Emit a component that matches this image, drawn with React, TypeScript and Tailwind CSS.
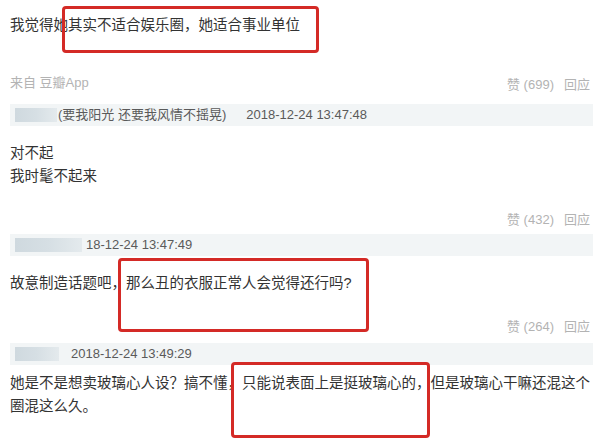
import React from "react";

const font = "font-['Liberation_Sans','Noto_Sans_CJK_SC',sans-serif]";

function Meta({ left, likes }: { left?: string; likes: number }) {
  return (
    <div className="flex h-[20px] items-center justify-between pr-[20px] text-[13px] text-[#b3b3b3]">
      <span>{left}</span>
      <span className="mt-[3px] flex gap-[10px]">
        <span>赞 ({likes})</span>
        <span>回应</span>
      </span>
    </div>
  );
}

function Bar({ blur, name, time, gap, className }: { blur: string; name?: string; time: string; gap: string; className: string }) {
  return (
    <div className={`flex w-[583px] items-center bg-[#f2f5f6] pl-[5px] text-[13px] text-[#5a5a5a] ${className}`}>
      <div className={`h-[14px] bg-gradient-to-r from-[#cfd9df] via-[#d6dfe4] to-[#e4eaed] ${blur}`} />
      {name && <span className="ml-[1px]">{name}</span>}
      <span className={gap}>{time}</span>
    </div>
  );
}

function RedBox({ className }: { className: string }) {
  return <div className={`absolute rounded-[4px] border-[3px] border-[#d42a26] ${className}`} />;
}

export default function App() {
  return (
    <div className={`relative h-[441px] w-[610px] overflow-hidden bg-white ${font}`}>
      <div className="flex flex-col pl-[10px] text-[14.5px] text-[#333]">
        <p className="mt-[15px] leading-[20px]">我觉得她其实不适合娱乐圈，她适合事业单位</p>

        <div className="mt-[38px]">
          <Meta left="来自 豆瓣App" likes={699} />
        </div>

        <Bar className="mt-[11px] h-[22px]" blur="w-[42px]" gap="ml-[20px]" name="(要我阳光 还要我风情不摇晃)" time="2018-12-24 13:47:48" />

        <p className="mt-[16px] leading-[23px]">
          对不起
          <br />
          我时髦不起来
        </p>

        <div className="mt-[20px]">
          <Meta likes={432} />
        </div>

        <Bar className="mt-[6px] h-[22px]" blur="w-[67px]" gap="ml-[4px]" time="18-12-24 13:47:49" />

        <p className="mt-[17px] leading-[20px]">故意制造话题吧，那么丑的衣服正常人会觉得还行吗?</p>

        <div className="mt-[22px]">
          <Meta likes={264} />
        </div>

        <Bar className="mt-[8px] h-[22px]" blur="w-[44px]" gap="ml-[12px]" time="2018-12-24 13:49:29" />

        <p className="mt-[7px] pr-[8px] leading-[23px]">
          她是不是想卖玻璃心人设？搞不懂，只能说表面上是挺玻璃心的，但是玻璃心干嘛还混这个圈混这么久。
        </p>
      </div>

      <RedBox className="left-[62px] top-[6px] h-[47px] w-[257px]" />
      <RedBox className="left-[118px] top-[258px] h-[74px] w-[251px]" />
      <RedBox className="left-[231px] top-[362px] h-[76px] w-[199px]" />
    </div>
  );
}
